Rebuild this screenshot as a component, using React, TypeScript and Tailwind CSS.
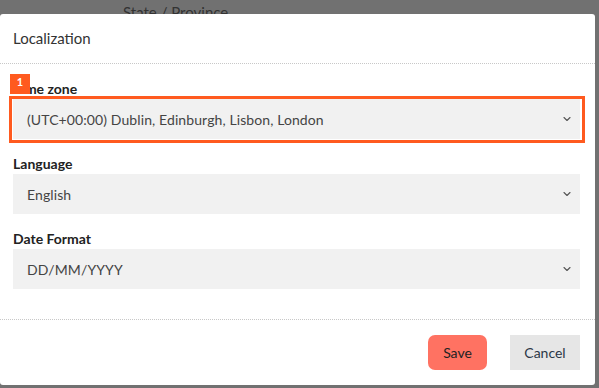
import { ChevronDown } from 'lucide-react';

const FIELDS = [
  { label: 'Language', value: 'English' },
  { label: 'Date Format', value: 'DD/MM/YYYY' },
];

function SelectBox({ value }: { value: string }) {
  return (
    <div className="flex h-[40px] items-center justify-between bg-[#f1f1f1] pl-[14px] pr-[7px] text-[14px] tracking-[0.1px] text-[#444]">
      <span>{value}</span>
      <ChevronDown className="h-[12px] w-[12px] text-[#555]" strokeWidth={2.2} />
    </div>
  );
}

export default function App() {
  return (
    <div
      className="flex h-[388px] w-[599px] flex-col overflow-hidden bg-[#717171]"
      style={{ fontFamily: 'Lato, "Liberation Sans", sans-serif' }}
    >
      <div className="h-[14px] shrink-0 overflow-hidden pl-[123px]">
        <p className="pt-[3px] text-[15px] leading-[18px] text-[#333]">State / Province</p>
      </div>

      <div className="flex h-[371px] w-[595px] shrink-0 flex-col rounded-[3px] bg-white">
        <header className="flex h-[50px] items-center border-b border-dotted border-[#c8c8c8] px-[13px] text-[15px] text-[#333]">
          Localization
        </header>

        <div className="flex flex-col gap-[15px] pl-[13px] pr-[15px] pt-[15px] pb-[30px]">
          <div className="flex flex-col">
            <div className="relative">
              <label className="block h-[20px] text-[14px] leading-[20px] font-bold text-[#222]">Time zone</label>
              <span className="absolute left-[-3px] top-[-5px] flex h-[20px] w-[20px] items-start justify-center bg-[#ff5a1f] pt-[1px] text-[11px] leading-[14px] font-bold text-white">
                1
              </span>
            </div>
            <div className="relative">
              <SelectBox value="(UTC+00:00) Dublin, Edinburgh, Lisbon, London" />
              <div className="pointer-events-none absolute top-[-3px] right-[-5px] bottom-[-4px] left-[-4px] border-[3px] border-[#ff5a1f]" />
            </div>
          </div>

          {FIELDS.map((field) => (
            <div key={field.label} className="flex flex-col">
              <label className="block h-[20px] text-[14px] leading-[20px] font-bold text-[#222]">{field.label}</label>
              <SelectBox value={field.value} />
            </div>
          ))}
        </div>

        <footer className="flex justify-end gap-[23px] border-t border-dotted border-[#c8c8c8] px-[15px] pt-[15px]">
          <button className="h-[35px] w-[59px] rounded-[7px] bg-[#ff7262] text-[14px] text-[#222]">Save</button>
          <button className="h-[35px] w-[70px] bg-[#e6e6e6] text-[14px] text-[#2b3747]">Cancel</button>
        </footer>
      </div>
    </div>
  );
}
